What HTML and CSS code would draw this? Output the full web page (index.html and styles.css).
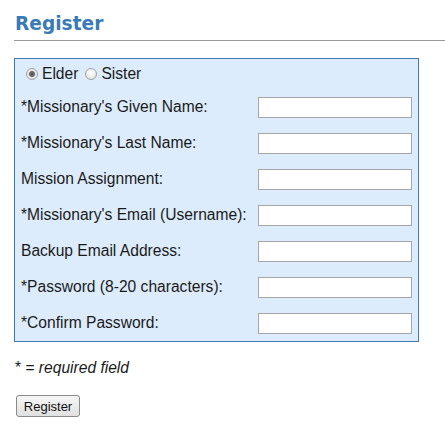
FILE: index.html
```html
<!DOCTYPE html>
<html>
<head>
<meta charset="utf-8">
<title>Register</title>
<link rel="stylesheet" href="styles.css">
</head>
<body>
<div class="page">
  <h1 class="title">Register</h1>
  <form class="form">
    <div class="panel">
      <div class="gender">
        <label class="radio"><input type="radio" name="g" checked><span>Elder</span></label>
        <label class="radio"><input type="radio" name="g"><span>Sister</span></label>
      </div>
      <div class="row"><label>*Missionary's Given Name:</label><input type="text" class="field"></div>
      <div class="row"><label>*Missionary's Last Name:</label><input type="text" class="field"></div>
      <div class="row"><label>Mission Assignment:</label><input type="text" class="field"></div>
      <div class="row"><label>*Missionary's Email (Username):</label><input type="text" class="field"></div>
      <div class="row"><label>Backup Email Address:</label><input type="text" class="field"></div>
      <div class="row"><label>*Password (8-20 characters):</label><input type="password" class="field"></div>
      <div class="row"><label>*Confirm Password:</label><input type="password" class="field"></div>
    </div>
    <p class="note">* = <em>required field</em></p>
    <button type="button" class="btn">Register</button>
  </form>
</div>
</body>
</html>
```
FILE: styles.css
```css
html, body {
  margin: 0;
  padding: 0;
  background: #fff;
}
.page {
  padding-left: 14px;
  font-family: "Liberation Sans", Arial, sans-serif;
  color: #1a1a1a;
}
.title {
  margin: 0 0 17px 0;
  padding: 12px 0 4px 1px;
  font-family: "DejaVu Sans", Verdana, sans-serif;
  font-size: 18.6px;
  line-height: 24px;
  font-weight: bold;
  color: #3a7bb6;
  border-bottom: 1px solid #9a9a9a;
}
.form {
  margin: 0;
}
.panel {
  width: 405px;
  box-sizing: border-box;
  border: 1px solid #3a7bb6;
  background: #ddecfc;
  padding: 0 6px 0 5px;
}
.gender {
  height: 30px;
  display: flex;
  align-items: center;
  font-size: 15.6px;
}
.radio {
  display: inline-flex;
  align-items: center;
  margin-right: 1px;
}
.radio input {
  appearance: none;
  -webkit-appearance: none;
  width: 12px;
  height: 12px;
  margin: 0 4px 0 6px;
  border: 1px solid #a2a2a2;
  border-radius: 50%;
  background: radial-gradient(circle at 50% 40%, #ffffff 0%, #eeeeee 55%, #d6d6d6 100%);
  box-sizing: border-box;
}
.radio input:checked {
  background: radial-gradient(circle, #555 0, #707070 2.6px, #e4e4e4 3.4px, #f6f6f6 100%);
}
.row {
  height: 36px;
  display: flex;
  align-items: center;
  justify-content: space-between;
  font-size: 15.6px;
}
.row label {
  padding-left: 1px;
}
.field {
  width: 154px;
  height: 21px;
  box-sizing: border-box;
  margin: 0;
  border: 1px solid #a6a6a6;
  background: #fff;
  padding: 1px 3px;
  font-size: 13px;
  outline: none;
}
.note {
  margin: 17px 0 0 1px;
  font-size: 15.6px;
  line-height: 18px;
}
.note em {
  font-style: italic;
}
.btn {
  display: block;
  margin: 18px 0 0 2px;
  width: 64px;
  height: 22px;
  padding: 0;
  font-family: "Liberation Sans", Arial, sans-serif;
  font-size: 13px;
  color: #111;
  border: 1px solid #8a8a8a;
  border-radius: 3px;
  background: linear-gradient(#f6f6f6, #e0e0e0);
}
```
